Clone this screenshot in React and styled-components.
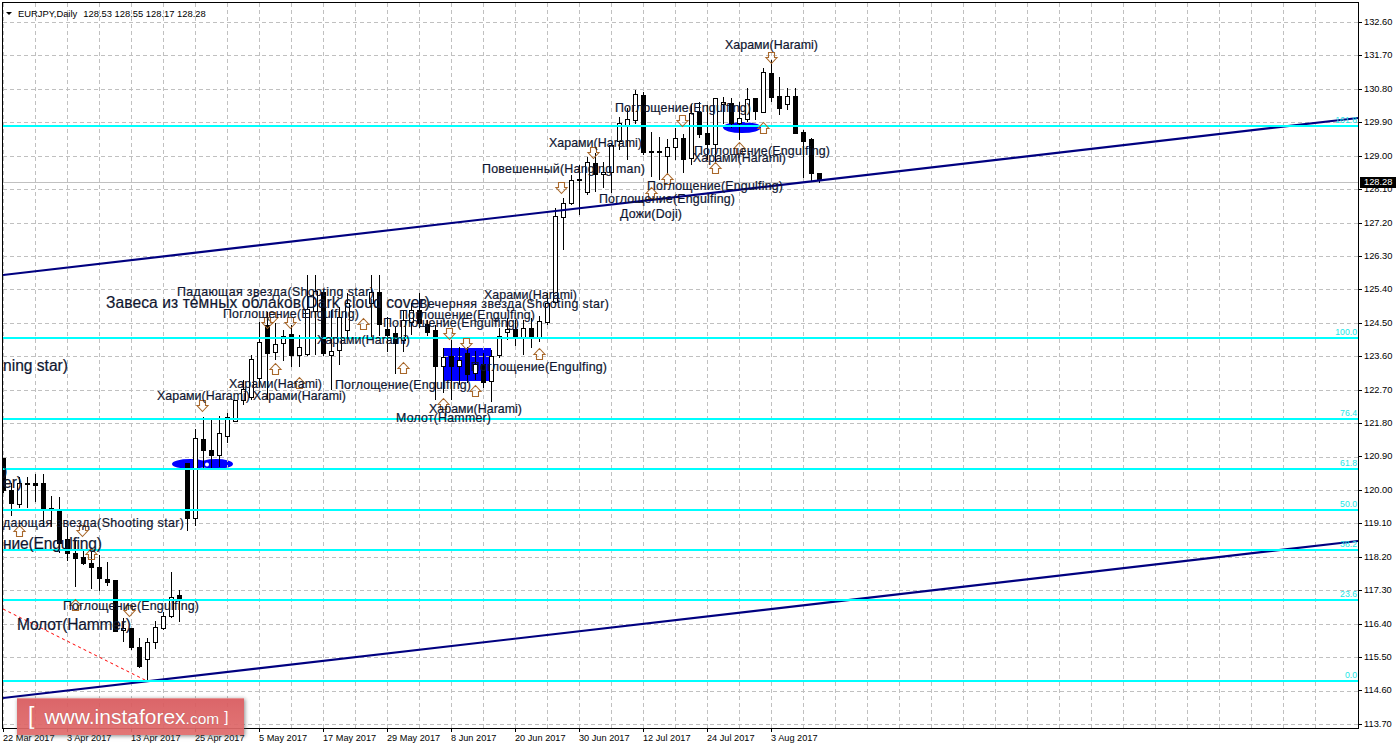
import React from 'react';
import styled, { createGlobalStyle } from 'styled-components';

const GlobalStyle = createGlobalStyle`
  html, body {
    margin: 0;
    padding: 0;
    background: #fff;
    overflow: hidden;
  }
`;

const FONT = `"Liberation Sans", Arial, sans-serif`;

// [x, high, bodyTop, bodyBottom, low, bull]
const CANDLES = [
  [3, 458, 458, 490, 493, 0], [11, 483, 490, 503, 516, 0], [19, 477, 483, 504, 508, 1], [27, 477, 483, 484, 508, 0],
  [35, 474, 483, 485, 502, 0], [43, 474, 483, 509, 527, 0], [51, 496, 508, 509, 527, 0], [59, 497, 511, 543, 553, 0],
  [67, 527, 539, 553, 561, 0], [75, 540, 553, 558, 587, 0], [83, 550, 557, 563, 565, 0], [91, 552, 563, 567, 589, 0],
  [99, 555, 567, 578, 591, 0], [107, 562, 579, 582, 586, 0], [115, 580, 580, 631, 631, 0], [123, 618, 628, 630, 642, 1],
  [131, 628, 628, 647, 650, 0], [139, 638, 647, 666, 668, 0], [147, 638, 642, 659, 680, 1], [155, 621, 627, 642, 649, 1],
  [163, 612, 616, 628, 630, 1], [171, 572, 597, 616, 618, 1], [179, 590, 595, 599, 622, 0], [187, 463, 463, 518, 531, 0],
  [195, 429, 438, 518, 526, 1], [203, 417, 439, 450, 470, 0], [211, 420, 450, 455, 468, 0], [219, 416, 433, 455, 467, 1],
  [227, 413, 417, 436, 443, 1], [235, 400, 400, 421, 421, 1], [243, 380, 389, 400, 405, 1], [251, 355, 359, 397, 400, 1],
  [259, 322, 342, 378, 387, 1], [267, 312, 325, 353, 400, 0], [275, 323, 344, 352, 360, 1], [283, 330, 336, 343, 361, 1],
  [291, 325, 334, 355, 367, 0], [299, 335, 347, 355, 367, 1], [307, 275, 309, 354, 356, 1], [315, 275, 291, 311, 355, 1],
  [323, 290, 292, 353, 356, 0], [331, 310, 351, 355, 390, 1], [339, 307, 317, 350, 365, 1], [347, 293, 303, 330, 338, 1],
  [371, 275, 292, 303, 338, 1], [379, 275, 292, 324, 336, 0],
  [387, 317, 329, 335, 352, 0], [395, 327, 333, 343, 374, 0], [403, 310, 320, 340, 352, 1], [411, 303, 310, 322, 335, 1],
  [419, 293, 310, 323, 328, 0], [427, 320, 324, 332, 336, 0], [435, 325, 330, 366, 400, 0], [443, 348, 357, 366, 393, 1],
  [451, 340, 356, 366, 400, 0], [459, 347, 360, 366, 385, 1], [467, 347, 353, 374, 383, 0], [475, 351, 364, 373, 380, 1],
  [483, 353, 364, 382, 388, 0], [491, 350, 356, 381, 402, 1], [499, 328, 336, 355, 358, 1], [507, 318, 329, 332, 340, 1],
  [515, 320, 329, 337, 346, 0], [523, 320, 328, 337, 355, 1], [531, 318, 328, 337, 348, 0], [539, 316, 321, 337, 342, 1],
  [547, 293, 303, 322, 325, 1], [555, 208, 216, 302, 304, 1], [563, 198, 203, 217, 250, 1], [571, 175, 180, 203, 205, 1],
  [579, 165, 179, 180, 215, 1], [587, 157, 162, 192, 195, 1], [595, 153, 163, 174, 192, 0], [603, 162, 172, 174, 188, 1],
  [611, 143, 145, 172, 193, 1], [619, 117, 123, 141, 150, 1], [627, 108, 119, 125, 160, 1], [635, 90, 94, 120, 124, 1],
  [643, 92, 95, 152, 155, 0], [651, 132, 151, 152, 177, 0], [659, 137, 151, 152, 180, 0], [667, 139, 147, 156, 175, 1],
  [675, 128, 138, 147, 160, 1], [683, 134, 138, 159, 173, 0], [691, 104, 113, 158, 165, 1], [699, 102, 112, 134, 138, 0],
  [707, 105, 133, 144, 160, 0], [715, 98, 98, 144, 162, 1], [723, 97, 102, 104, 124, 1], [731, 98, 103, 123, 128, 0],
  [739, 102, 118, 123, 140, 1], [747, 88, 99, 119, 122, 1], [755, 98, 98, 111, 120, 0], [763, 68, 72, 112, 112, 1],
  [771, 60, 73, 97, 102, 0], [779, 77, 96, 108, 115, 0], [787, 88, 96, 104, 110, 1], [795, 88, 96, 133, 134, 0],
  [803, 130, 132, 141, 178, 0], [811, 138, 139, 173, 182, 0], [819, 173, 173, 180, 183, 0],
];

const LEVELS = [
  { y: 126, label: '161.8' }, { y: 338, label: '100.0' }, { y: 419, label: '76.4' }, { y: 469, label: '61.8' },
  { y: 510, label: '50.0' }, { y: 550, label: '38.2' }, { y: 600, label: '23.6' }, { y: 681, label: '0.0' },
];

// the terminal font runs a little wider than Arial, so each caption keeps its measured width
const WIDTHS = {
  'Харами(Harami)': 93,
  'Поглощение(Engulfing)': 136,
  'Повешенный(Hanging man)': 163,
  'Дожи(Doji)': 62,
  'Падающая звезда(Shooting star)': 197,
  'Вечерняя звезда(Shooting star)': 190,
  'Молот(Hammer)': 95,
  'дающая звезда(Shooting star)': 181,
  'Завеса из темных облаков(Dark cloud cover)': 324,
  'ning star)': 65,
  'ние(Engulfing)': 99,
  'Молот(Hammer)_big': 114,
};

const PATTERNS = [
  ['Харами(Harami)', 725, 49], ['Поглощение(Engulfing)', 615, 112], ['Харами(Harami)', 549, 147],
  ['Повешенный(Hanging man)', 482, 173], ['Поглощение(Engulfing)', 694, 155], ['Харами(Harami)', 693, 162],
  ['Поглощение(Engulfing)', 647, 190], ['Поглощение(Engulfing)', 599, 203], ['Дожи(Doji)', 620, 218],
  ['Падающая звезда(Shooting star)', 177, 296], ['Поглощение(Engulfing)', 223, 318],
  ['Вечерняя звезда(Shooting star)', 419, 308], ['Харами(Harami)', 484, 299], ['Поглощение(Engulfing)', 399, 319],
  ['Поглощение(Engulfing)', 383, 327], ['Харами(Harami)', 317, 344], ['Поглощение(Engulfing)', 335, 389],
  ['Поглощение(Engulfing)', 471, 371], ['Харами(Harami)', 229, 388], ['Харами(Harami)', 253, 400],
  ['Харами(Harami)', 157, 400], ['Харами(Harami)', 429, 413], ['Молот(Hammer)', 396, 422],
  ['дающая звезда(Shooting star)', 3, 527], ['Поглощение(Engulfing)', 63, 610], [')', 3, 475],
];

const BIG_PATTERNS = [
  ['Завеса из темных облаков(Dark cloud cover)', 106, 308], ['ning star)', 3, 371], ['er)', 3, 488],
  ['ние(Engulfing)', 3, 549], ['Молот(Hammer)', 17, 630, 'Молот(Hammer)_big'],
];

// [center x, top y, direction]
const ARROWS = [
  [771, 52, 'down'], [682, 115, 'down'], [593, 147, 'down'], [561, 182, 'down'], [763, 122, 'up'], [739, 142, 'up'],
  [715, 162, 'up'], [667, 173, 'up'], [651, 187, 'up'], [466, 338, 'down'], [449, 328, 'down'], [539, 348, 'up'],
  [475, 385, 'up'], [443, 398, 'up'], [403, 362, 'up'], [363, 318, 'up'], [290, 317, 'down'], [272, 312, 'down'],
  [267, 317, 'down'], [275, 363, 'up'], [299, 377, 'up'], [202, 400, 'down'], [19, 525, 'up'], [82, 525, 'down'],
  [75, 599, 'up'], [129, 605, 'down'], [91, 548, 'up'],
];

const PRICES = ['132.60', '131.70', '130.80', '129.90', '129.00', '128.10', '127.20', '126.30', '125.40', '124.50', '123.60',
  '122.70', '121.80', '120.90', '120.00', '119.10', '118.20', '117.30', '116.40', '115.50', '114.60', '113.70'];

const DATES = ['22 Mar 2017', '3 Apr 2017', '13 Apr 2017', '25 Apr 2017', '5 May 2017', '17 May 2017', '29 May 2017',
  '8 Jun 2017', '20 Jun 2017', '30 Jun 2017', '12 Jul 2017', '24 Jul 2017', '3 Aug 2017'];

const gridX = Array.from({ length: 42 }, (_, i) => 3 + 32 * i);
const gridY = Array.from({ length: 22 }, (_, i) => Math.round(22 + 33.43 * i));

const arrowPoints = (cx, y, dir) => {
  const c = cx + 0.5;
  const t = y + 0.5;
  if (dir === 'up') {
    return `${c},${t} ${c + 5.5},${t + 6} ${c + 3},${t + 6} ${c + 3},${t + 11} ${c - 3},${t + 11} ${c - 3},${t + 6} ${c - 5.5},${t + 6}`;
  }
  return `${c},${t + 11} ${c + 5.5},${t + 5} ${c + 3},${t + 5} ${c + 3},${t} ${c - 3},${t} ${c - 3},${t + 5} ${c - 5.5},${t + 5}`;
};

export default function App() {
  return (
    <>
      <GlobalStyle />
      <Terminal>
        <Plot>
          <Symbol>
            <SymbolMark />
            <span>EURJPY,Daily</span>
            <span>128.53 128.55 128.17 128.28</span>
          </Symbol>
          <ChartSvg viewBox="3 3 1355 725">
            <BlueShape as="rect" x="443" y="348" width="48" height="33" />
            <BlueShape as="ellipse" cx="190" cy="464" rx="18" ry="5" />
            <BlueShape as="ellipse" cx="216" cy="464" rx="17" ry="5" />
            <BlueShape as="ellipse" cx="742" cy="127.5" rx="19" ry="5.5" />

            {gridX.map((x) => <GridLine key={x} x1={x + 0.5} x2={x + 0.5} y1="3" y2="728" />)}
            {gridY.map((y) => <GridLine key={y} x1="3" x2="1358" y1={y + 0.5} y2={y + 0.5} />)}
            <PriceLine x1="3" x2="1358" y1="182.5" y2="182.5" />
            <RedTrend x1="3" y1="609" x2="147" y2="681" />

            {CANDLES.map(([x, hi, top, bot, lo, bull]) => (
              <g key={x}>
                <Wick x1={x + 0.5} x2={x + 0.5} y1={hi} y2={lo} />
                <Body x={x - 1.5} y={top + 0.5} width="4" height={Math.max(bot - top, 1)} $bull={bull} />
              </g>
            ))}

            <WhiteHole cx="207" cy="464.5" r="2" />
            <NavyLine x1="3" y1="698" x2="1358" y2="541" />
            <NavyLine x1="3" y1="275" x2="1358" y2="118" />
            {LEVELS.map((l) => <LevelLine key={l.y} x1="3" x2="1358" y1={l.y} y2={l.y} />)}
            {LEVELS.map((l) => <LevelText key={l.label} x="1357" y={l.y - 3}>{l.label}</LevelText>)}

            {ARROWS.map(([x, y, dir]) => <Arrow key={`${x}-${y}`} points={arrowPoints(x, y, dir)} />)}
            {PATTERNS.map(([t, x, y]) => (
              <PatternText key={`${x}-${y}`} x={x} y={y} textLength={WIDTHS[t]}>{t}</PatternText>
            ))}
            {BIG_PATTERNS.map(([t, x, y, w]) => (
              <PatternText key={`${x}-${y}`} x={x} y={y} textLength={WIDTHS[w || t]} $big>{t}</PatternText>
            ))}
          </ChartSvg>
        </Plot>

        <PriceAxis>
          {PRICES.map((p) => <PriceLabel key={p}>{p}</PriceLabel>)}
          <PriceTag>128.28</PriceTag>
        </PriceAxis>

        <TimeAxis>
          {DATES.map((d) => <DateLabel key={d}>{d}</DateLabel>)}
        </TimeAxis>

        <Badge>
          <BadgeBracket>[</BadgeBracket>
          <BadgeUrl>www.instaforex<small>.com</small></BadgeUrl>
          <BadgeBracket $small>]</BadgeBracket>
        </Badge>
      </Terminal>
    </>
  );
}

const Terminal = styled.div`
  position: relative;
  width: 1398px;
  height: 749px;
  padding: 2px 0 0 2px;
  box-sizing: border-box;
  display: grid;
  grid-template-columns: 1357px 39px;
  grid-template-rows: 727px 20px;
  background: #fff;
  font-family: ${FONT};
  color: #000;
`;

const Plot = styled.div`
  position: relative;
  border: 1px solid #000;
  overflow: hidden;
`;

const ChartSvg = styled.svg`
  display: block;
  width: 1355px;
  height: 725px;
  font-family: ${FONT};
`;

const Symbol = styled.div`
  position: absolute;
  top: 5px;
  left: 3px;
  display: flex;
  align-items: center;
  gap: 6px;
  font-size: 9.4px;
  line-height: 11px;
  color: #000;
  white-space: nowrap;
  z-index: 1;
`;

const SymbolMark = styled.i`
  width: 0;
  height: 0;
  margin-right: 0;
  border-left: 3px solid transparent;
  border-right: 3px solid transparent;
  border-top: 3px solid #000;
`;

const GridLine = styled.line`
  stroke: #c0c0c0;
  stroke-width: 1;
  stroke-dasharray: 4 3;
  shape-rendering: crispEdges;
`;

const PriceLine = styled.line`
  stroke: #c0c0c0;
  stroke-width: 1;
  shape-rendering: crispEdges;
`;

const RedTrend = styled.line`
  stroke: #ff0000;
  stroke-width: 1;
  stroke-dasharray: 3 3;
`;

const BlueShape = styled.rect`
  fill: #0000ff;
`;

const WhiteHole = styled.circle`
  fill: #fff;
`;

const Wick = styled.line`
  stroke: #000;
  stroke-width: 1;
  shape-rendering: crispEdges;
`;

const Body = styled.rect`
  fill: ${(p) => (p.$bull ? '#fff' : '#000')};
  stroke: #000;
  stroke-width: 1;
  shape-rendering: crispEdges;
`;

const NavyLine = styled.line`
  stroke: #000080;
  stroke-width: 2.2;
`;

const LevelLine = styled.line`
  stroke: #00ffff;
  stroke-width: 2;
  shape-rendering: crispEdges;
`;

const LevelText = styled.text`
  fill: #22e6e6;
  font-size: 8.7px;
  text-anchor: end;
`;

const Arrow = styled.polygon`
  fill: none;
  stroke: #a8672a;
  stroke-width: 1.1;
`;

const PatternText = styled.text`
  fill: #0f1630;
  stroke: #0f1630;
  stroke-width: 0.2;
  font-size: ${(p) => (p.$big ? '15.6px' : '12.4px')};
  white-space: pre;
`;

const PriceAxis = styled.div`
  position: relative;
  display: flex;
  flex-direction: column;
  padding-top: 3.3px;
`;

const PriceLabel = styled.div`
  position: relative;
  flex: 0 0 33.43px;
  display: flex;
  align-items: center;
  padding-left: 5px;
  font-size: 9.3px;
  color: #000;

  &::before {
    content: '';
    position: absolute;
    left: 0;
    top: 50%;
    width: 3px;
    height: 1px;
    background: #000;
  }
`;

const PriceTag = styled.div`
  position: absolute;
  top: 175px;
  left: 1px;
  width: 36px;
  height: 11px;
  padding-left: 4px;
  box-sizing: border-box;
  background: #000;
  color: #fff;
  font-size: 9.3px;
  line-height: 11px;
`;

const TimeAxis = styled.div`
  grid-column: 1 / span 2;
  display: flex;
`;

const DateLabel = styled.div`
  position: relative;
  flex: 0 0 64px;
  padding: 4px 0 0 1px;
  box-sizing: border-box;
  font-size: 9.2px;
  line-height: 11px;
  color: #000;
  white-space: nowrap;

  &::before {
    content: '';
    position: absolute;
    left: 1px;
    top: 0;
    width: 1px;
    height: 3px;
    background: #000;
  }
`;

const Badge = styled.div`
  position: absolute;
  left: 17px;
  top: 698px;
  width: 227px;
  height: 37px;
  display: flex;
  align-items: center;
  padding-left: 11px;
  box-sizing: border-box;
  background: linear-gradient(#d95a5e, #e06c6c);
  opacity: 0.93;
  border-top: 1px solid #e58a8a;
  box-shadow: 1px 1px 4px rgba(90, 90, 90, 0.75);
  color: #fff;
`;

const BadgeBracket = styled.span`
  font-size: ${(p) => (p.$small ? '15px' : '23px')};
  margin-left: ${(p) => (p.$small ? '5px' : '0')};
  margin-top: -2px;
`;

const BadgeUrl = styled.span`
  margin-left: 10px;
  font-size: 21px;
  white-space: nowrap;
  text-shadow: 0 0 1px rgba(120, 30, 30, 0.5);

  small {
    font-size: 15.5px;
  }
`;
